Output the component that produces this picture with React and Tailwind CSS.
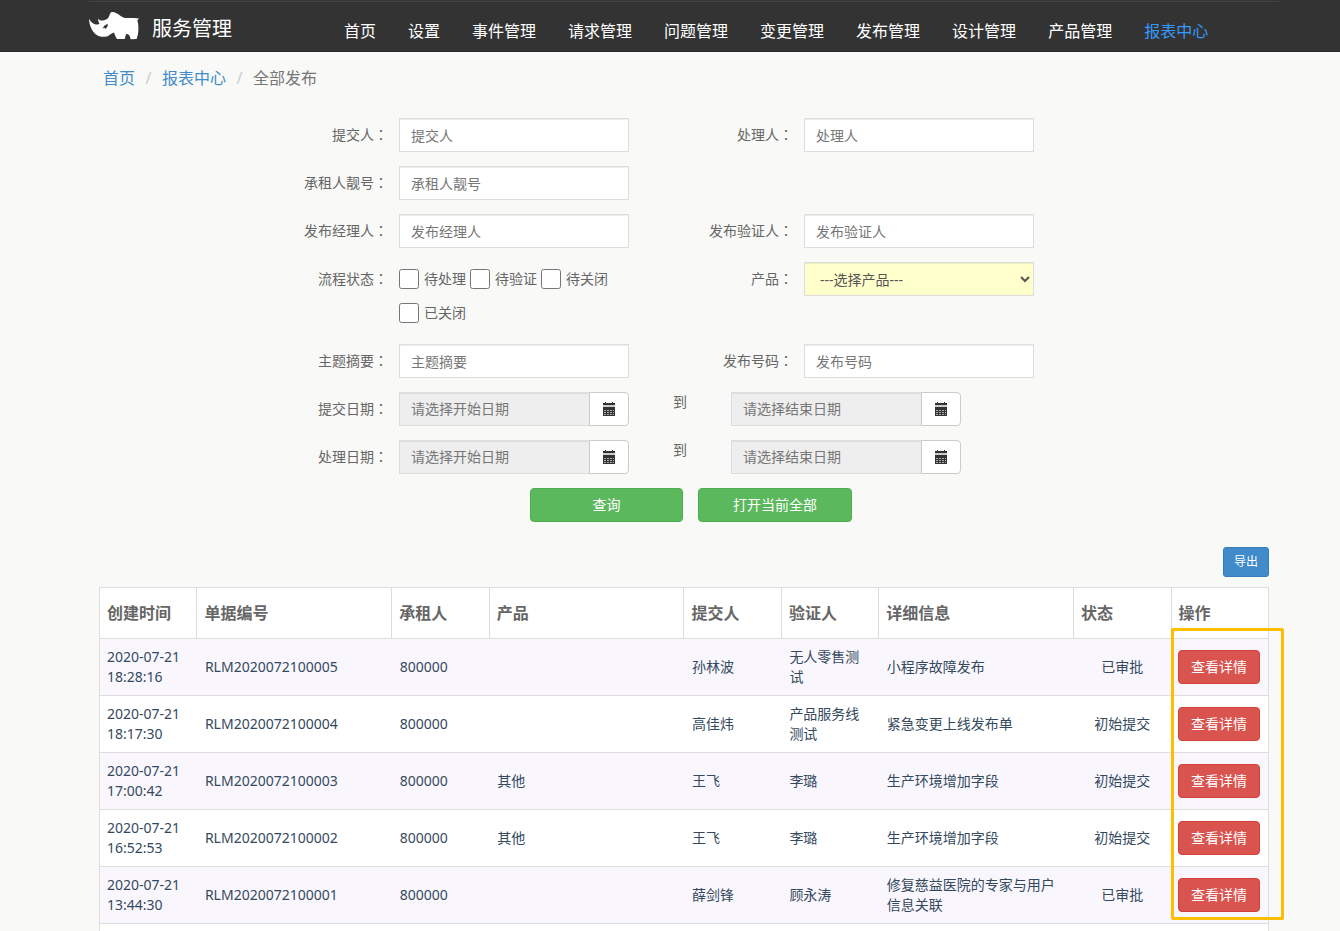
import React, { useState } from 'react'

const NAV = ['首页', '设置', '事件管理', '请求管理', '问题管理', '变更管理', '发布管理', '设计管理', '产品管理', '报表中心']

const COLUMNS = [
  { title: '创建时间', width: 'w-1/12' },
  { title: '单据编号', width: 'w-2/12' },
  { title: '承租人', width: 'w-1/12' },
  { title: '产品', width: 'w-2/12' },
  { title: '提交人', width: 'w-1/12' },
  { title: '验证人', width: 'w-1/12' },
  { title: '详细信息', width: 'w-2/12' },
  { title: '状态', width: 'w-1/12' },
  { title: '操作', width: 'w-1/12' },
]

const RELEASES = [
  { time: '2020-07-21 18:28:16', no: 'RLM2020072100005', tenant: '800000', product: '', submitter: '孙林波', verifier: '无人零售测试', detail: '小程序故障发布', status: '已审批' },
  { time: '2020-07-21 18:17:30', no: 'RLM2020072100004', tenant: '800000', product: '', submitter: '高佳炜', verifier: '产品服务线测试', detail: '紧急变更上线发布单', status: '初始提交' },
  { time: '2020-07-21 17:00:42', no: 'RLM2020072100003', tenant: '800000', product: '其他', submitter: '王飞', verifier: '李璐', detail: '生产环境增加字段', status: '初始提交' },
  { time: '2020-07-21 16:52:53', no: 'RLM2020072100002', tenant: '800000', product: '其他', submitter: '王飞', verifier: '李璐', detail: '生产环境增加字段', status: '初始提交' },
  { time: '2020-07-21 13:44:30', no: 'RLM2020072100001', tenant: '800000', product: '', submitter: '薛剑锋', verifier: '顾永涛', detail: '修复慈益医院的专家与用户信息关联', status: '已审批' },
]

const STATUSES = ['待处理', '待验证', '待关闭', '已关闭']

const Logo = () => (
  <svg className="w-[51px] h-[28px] mt-[10px]" viewBox="0 0 51 28" fill="#fff">
    <path d="M0 6.700C1.500 9.500 3.500 11.500 6 12.300C8 12.800 10 12.500 10.500 11.500C9.500 10 9 8.500 9 6.700C10.500 8.500 13 9 15 8.200C17 7.500 18.500 7 19.500 5.500C20.500 3.500 21 1 22 0.200C23.500 -0.200 25.500 0.200 27 1C29 2 30.500 3.200 32 4.200C34 5.500 36 6 38 6.100L45 6L50 6.500L48.300 8.500C49.500 12 49.700 17 49 22L47.700 27L41.700 27.200L40.500 23.500L38.500 22L37 22.300L35.700 27L28 27L26.700 25L25 20.500C23 21.500 22.500 21.500 21 22.500C19.500 24 18 24.700 16 24.700C13 25 11 24.700 9 23.700C5 21.500 3 18.500 1.700 15C0.700 12 0 9.500 0 6.700Z" />
    <path d="M13.500 16.500L15.500 13.500L18.800 11.800L18.500 14.500L16.500 17L15.500 15.800Z" fill="#333" />
  </svg>
)

const CalendarIcon = () => (
  <svg className="w-[14px] h-[14px] mb-px" viewBox="0 0 14 14" fill="#333" shapeRendering="crispEdges">
    <path d="M3 0H4V1H10V0H11V1H13V3H1V1H3ZM1 5H13V14H1Z" />
    <path d="M1 3H13V5H1Z" fill="#ccc" />
    <path d="M2 8H12V9H2ZM2 10H12V11H2ZM2 12H12V13H2Z" fill="#aaa" />
    <path d="M4 7H5V13H4ZM7 7H8V13H7ZM10 7H11V13H10Z" />
  </svg>
)

const Label = ({ htmlFor, children }) => (
  <label htmlFor={htmlFor} className="h-[34px] pr-[11px] text-right leading-8 text-[#666] whitespace-nowrap">
    {children}
    <span className="font-['Noto_Sans_CJK_TC',sans-serif]">：</span>
  </label>
)

const Field = ({ id, label }) => (
  <>
    <Label htmlFor={id}>{label}</Label>
    <input
      id={id}
      type="text"
      placeholder={label}
      className="w-full h-[34px] px-[11px] bg-white border border-[#ddd] shadow-[inset_0_1px_1px_rgba(0,0,0,0.075)] outline-none placeholder:text-[#777]"
    />
  </>
)

const DateInput = ({ id, label, placeholder }) => (
  <div className="flex min-w-0 h-[34px]">
    <input
      id={id}
      type="text"
      readOnly
      aria-label={label}
      placeholder={placeholder}
      className="flex-1 min-w-0 px-[11px] bg-[#eee] border border-[#ddd] shadow-[inset_0_1px_1px_rgba(0,0,0,0.075)] outline-none placeholder:text-[#777]"
    />
    <button type="button" aria-label={placeholder} className="w-10 -ml-px flex items-center justify-center bg-white border border-[#ccc] rounded-r">
      <CalendarIcon />
    </button>
  </div>
)

const DateRow = ({ id, label }) => (
  <div className="grid grid-cols-[300fr_230fr_102fr_230fr_308fr]">
    <Label htmlFor={`${id}-start`}>{label}</Label>
    <DateInput id={`${id}-start`} placeholder="请选择开始日期" />
    <span className="text-center leading-5 text-[#666]">到</span>
    <DateInput id={`${id}-end`} label={`${label}结束`} placeholder="请选择结束日期" />
  </div>
)

const App = () => {
  const [checked, setChecked] = useState([])

  const toggle = (status) => {
    setChecked(checked.includes(status) ? checked.filter((s) => s !== status) : [...checked, status])
  }

  const row = 'grid grid-cols-[300fr_230fr_175fr_230fr_235fr]'
  const green = 'h-[34px] rounded border border-[#4cae4c] bg-[#5cb85c] text-white'

  return (
    <div className="min-h-screen bg-[#f9f9f7] text-sm leading-5 text-[#555] font-['Noto_Sans','Noto_Sans_CJK_SC',sans-serif]">
      <header className="h-[52px] bg-[#333] pt-px pl-7 border-b border-[#2e2828]">
        <div className="mx-auto max-w-[1190px] border-t border-[#444] flex">
          <a href="#" className="flex items-start text-xl leading-7 text-white">
            <Logo />
            <span className="mt-[13px] ml-3">服务管理</span>
          </a>
          <nav className="flex items-center gap-8 h-[50px] mt-1 ml-28 text-base whitespace-nowrap">
            {NAV.map((item) => (
              <a key={item} href="#" className={item === '报表中心' ? 'text-[#3399ff]' : 'text-white'}>
                {item}
              </a>
            ))}
          </nav>
        </div>
      </header>

      <div className="pl-7">
        <main className="mx-auto max-w-[1170px]">
          {/* Breadcrumb */}
          <nav className="flex pl-1 pt-4 text-base leading-5">
            <a href="#" className="text-[#428bca]">首页</a>
            <span className="w-[27px] text-center text-[#ccc]">/</span>
            <a href="#" className="text-[#428bca]">报表中心</a>
            <span className="w-[27px] text-center text-[#ccc]">/</span>
            <span className="text-[#777]">全部发布</span>
          </nav>

          {/* Filters */}
          <form className="flex flex-col gap-[14px] mt-[30px]" onSubmit={(e) => e.preventDefault()}>
            <div className={row}>
              <Field id="submitter" label="提交人" />
              <Field id="handler" label="处理人" />
            </div>
            <div className={row}>
              <Field id="tenant" label="承租人靓号" />
            </div>
            <div className={row}>
              <Field id="manager" label="发布经理人" />
              <Field id="verifier" label="发布验证人" />
            </div>
            <div className={row}>
              <Label>流程状态</Label>
              <div className="flex flex-wrap gap-x-1">
                {STATUSES.map((status) => (
                  <label key={status} className="flex items-center h-[34px] text-[#666]">
                    <input
                      type="checkbox"
                      checked={checked.includes(status)}
                      onChange={() => toggle(status)}
                      className="w-5 h-5 mr-[5px]"
                    />
                    {status}
                  </label>
                ))}
              </div>
              <Label htmlFor="product">产品</Label>
              <select id="product" className="w-full h-[34px] px-[11px] bg-[#ffffcc] border border-[#ddd] shadow-[inset_0_1px_1px_rgba(0,0,0,0.075)] outline-none">
                <option>---选择产品---</option>
              </select>
            </div>
            <div className={row}>
              <Field id="subject" label="主题摘要" />
              <Field id="number" label="发布号码" />
            </div>
            <DateRow id="submit-date" label="提交日期" />
            <DateRow id="handle-date" label="处理日期" />
            <div className="grid grid-cols-[431fr_153fr_15fr_154fr_417fr]">
              <button type="submit" className={`col-start-2 ${green}`}>查询</button>
              <button type="button" className={`col-start-4 ${green}`}>打开当前全部</button>
            </div>
          </form>

          <div className="flex justify-end mt-[25px] mb-[10px]">
            <button type="button" className="h-[30px] px-[10px] rounded-[3px] border border-[#357ebd] bg-[#428bca] text-xs text-white">
              导出
            </button>
          </div>

          {/* Results */}
          <div className="relative">
            <table className="w-full table-fixed border-collapse border-x border-t border-[#ddd] bg-white">
              <thead>
                <tr>
                  {COLUMNS.map((col) => (
                    <th key={col.title} className={`${col.width} h-[51px] px-[7px] border border-[#ddd] text-left text-base font-bold text-[#666]`}>
                      {col.title}
                    </th>
                  ))}
                </tr>
              </thead>
              <tbody className="text-[#34495e]">
                {RELEASES.map((item) => (
                  <tr key={item.no} className="border-b border-[#ddd] odd:bg-[#f9f7fd]">
                    <td className="py-2 px-[7px]">{item.time}</td>
                    <td className="p-2">{item.no}</td>
                    <td className="p-2">{item.tenant}</td>
                    <td className="p-2">{item.product}</td>
                    <td className="p-2">{item.submitter}</td>
                    <td className="p-2">{item.verifier}</td>
                    <td className="p-2">{item.detail}</td>
                    <td className="p-2 text-center">{item.status}</td>
                    <td className="px-[7px]">
                      <button type="button" className="h-[34px] px-[12px] rounded border border-[#d43f3a] bg-[#d9534f] text-white whitespace-nowrap">
                        查看详情
                      </button>
                    </td>
                  </tr>
                ))}
                <tr>
                  <td colSpan={9} className="h-[7px] p-0" />
                </tr>
              </tbody>
            </table>
            <div className="absolute top-[41px] -right-[15px] bottom-[11px] w-[113px] border-3 border-[#ffbf00] rounded-xs pointer-events-none" />
          </div>
        </main>
      </div>
    </div>
  )
}

export default App
